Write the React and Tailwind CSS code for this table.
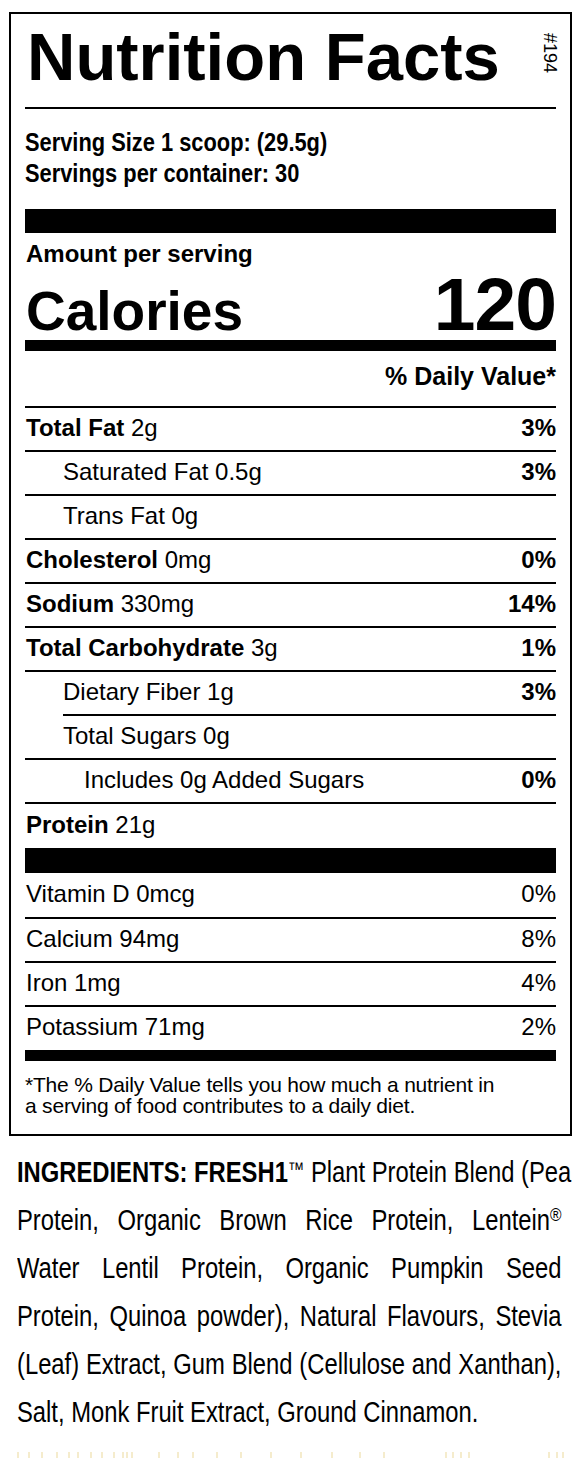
const sans = "font-['Liberation_Sans',Arial,Helvetica,sans-serif]";

const Line = ({ indent = false }) => (
    <div className={`h-[2px] bg-black ${indent ? "ml-[38px]" : ""}`}></div>
);

const Row = ({ label, amount, pct, bold = false, pctBold = true, indent = 0, h = "h-[42px]" }) => {
    const pad = indent === 1 ? "pl-[38px]" : indent === 2 ? "pl-[59px]" : "pl-[1px]";
    return (
        <div className={`flex items-center justify-between ${h} pb-[3px] text-[24px] leading-none ${pad}`}>
            <span>
                {bold ? <span className="font-bold">{label}</span> : label}
                {amount ? ` ${amount}` : ""}
            </span>
            {pct && <span className={pctBold ? "font-bold" : ""}>{pct}</span>}
        </div>
    );
};

const ticks = [17, 28, 41, 56, 68, 77, 90, 101, 113, 122, 126, 131, 158, 177, 192, 216, 240, 270, 300, 331, 359, 383, 445, 452, 460, 468, 548, 556, 562];

// condensed look: Liberation Sans squeezed horizontally (no narrow face installed)
const ingredientLines = [
    <>
        <span className="font-bold">INGREDIENTS: FRESH1</span>
        <span className="relative top-[-6px] text-[20px] leading-none">™</span> Plant Protein Blend (Pea
    </>,
    <>
        Protein, Organic Brown Rice Protein, Lentein
        <span className="relative top-[-9px] text-[19px] leading-none">®</span>
    </>,
    <>Water Lentil Protein, Organic Pumpkin Seed</>,
    <>Protein, Quinoa powder), Natural Flavours, Stevia</>,
    <>(Leaf) Extract, Gum Blend (Cellulose and Xanthan),</>,
];

const App = () => {
    return (
        <div className={`w-[586px] h-[1458px] bg-white text-black pt-[12px] overflow-hidden ${sans}`}>
            {/* label box */}
            <div className="ml-[9px] w-[563px] border-2 border-black px-[14px]">
                <div className="flex h-[84px] items-center justify-between">
                    <h1 className="text-[67px] font-bold leading-none pl-[2px]">Nutrition Facts</h1>
                    <span className="text-[18px] leading-none mr-[-3px] mt-[-6px] [writing-mode:vertical-rl]">#194</span>
                </div>
                <div className="mt-[9px] h-[2px] bg-black"></div>

                <div className="pt-[18px] w-[620px] origin-left scale-x-[0.84] text-[26px] font-bold leading-[31px]">
                    <div>Serving Size 1 scoop: (29.5g)</div>
                    <div>Servings per container: 30</div>
                </div>
                <div className="mt-[20px] h-[24px] bg-black"></div>

                <div className="mt-[7px] h-[28px] flex items-center text-[24px] font-bold leading-none pl-[1px]">
                    Amount per serving
                </div>
                <div className="flex h-[72px] items-baseline justify-between font-bold leading-[72px]">
                    <span className="text-[55px] pl-[1px]">Calories</span>
                    <span className="text-[75px] tracking-[-1px]">120</span>
                </div>
                <div className="h-[11px] bg-black"></div>

                <div className="flex h-[55px] items-center justify-end pb-[4px] text-[25px] font-bold leading-none">
                    % Daily Value*
                </div>
                <Line />
                <Row label="Total Fat" amount="2g" pct="3%" bold />
                <Line />
                <Row label="Saturated Fat 0.5g" pct="3%" indent={1} />
                <Line />
                <Row label="Trans Fat 0g" indent={1} />
                <Line />
                <Row label="Cholesterol" amount="0mg" pct="0%" bold />
                <Line />
                <Row label="Sodium" amount="330mg" pct="14%" bold />
                <Line />
                <Row label="Total Carbohydrate" amount="3g" pct="1%" bold />
                <Line />
                <Row label="Dietary Fiber 1g" pct="3%" indent={1} />
                <Line indent />
                <Row label="Total Sugars 0g" indent={1} />
                <Line />
                <Row label="Includes 0g Added Sugars" pct="0%" indent={2} />
                <Line />
                <Row label="Protein" amount="21g" bold h="h-[44px]" />
                <div className="h-[25px] bg-black"></div>

                <Row label="Vitamin D 0mcg" pct="0%" pctBold={false} h="h-[44px]" />
                <Line />
                <Row label="Calcium 94mg" pct="8%" pctBold={false} />
                <Line />
                <Row label="Iron 1mg" pct="4%" pctBold={false} />
                <Line />
                <Row label="Potassium 71mg" pct="2%" pctBold={false} h="h-[43px]" />
                <div className="h-[11px] bg-black"></div>

                <p className="pt-[13px] pb-[18px] text-[21px] leading-[21px] tracking-[-0.2px]">
                    *The % Daily Value tells you how much a nutrient in
                    <br />
                    a serving of food contributes to a daily diet.
                </p>
            </div>

            {/* ingredients */}
            <div className="mt-[12px] ml-[17px] w-[664px] origin-left scale-x-[0.82] text-[29px] leading-[48px]">
                {ingredientLines.map((l, i) => (
                    <div key={i} className="whitespace-nowrap text-justify [text-align-last:justify]">
                        {l}
                    </div>
                ))}
                <div className="whitespace-nowrap">Salt, Monk Fruit Extract, Ground Cinnamon.</div>
            </div>

            <div className="mt-[16px] flex h-[10px]">
                {ticks.map((x, i) => (
                    <div
                        key={i}
                        className="w-[2px] h-full bg-[#f1e4b8] opacity-70"
                        style={{ marginLeft: i === 0 ? x : x - ticks[i - 1] - 2 }}
                    ></div>
                ))}
            </div>
        </div>
    );
};

export default App;
